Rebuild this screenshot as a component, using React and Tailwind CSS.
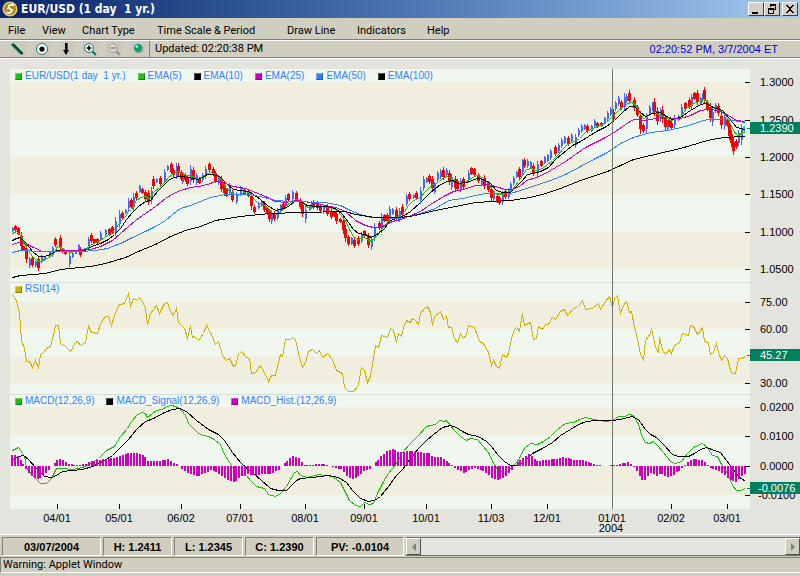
import React from 'react';

const GREEN = '#20c010';
const MAGENTA = '#cc00bb';
const BLUE = '#3080ff';
const GOLD = '#ccb400';
const SANS = '"Liberation Sans", Arial, sans-serif';

const menus = ['File', 'View', 'Chart Type', 'Time Scale & Period', 'Draw Line', 'Indicators', 'Help'];

const priceLegend = [
  { label: 'EUR/USD(1 day  1 yr.)', chip: 'bg-[#20c010]' },
  { label: 'EMA(5)', chip: 'bg-[#20c010]' },
  { label: 'EMA(10)', chip: 'bg-black' },
  { label: 'EMA(25)', chip: 'bg-[#cc00bb]' },
  { label: 'EMA(50)', chip: 'bg-[#3080ff]' },
  { label: 'EMA(100)', chip: 'bg-black' },
];
const rsiLegend = [{ label: 'RSI(14)', chip: 'bg-[#ccb400]' }];
const macdLegend = [
  { label: 'MACD(12,26,9)', chip: 'bg-[#20c010]' },
  { label: 'MACD_Signal(12,26,9)', chip: 'bg-black' },
  { label: 'MACD_Hist.(12,26,9)', chip: 'bg-[#cc00bb]' },
];

// x,high,low
const up = '12,227,231 29,257,267 35,261,266 41,255,262 44,256,260 49,251,257 52,246,256 69,253,266 72,252,257 75,250,253 78,244,250 84,248,250 88,237,248 100,231,240 105,229,235 115,217,235 119,210,227 125,209,213 128,198,210 133,193,210 139,185,192 151,187,203 156,178,182 164,169,182 167,165,170 176,163,178 182,172,183 190,165,184 196,173,184 202,173,181 205,166,178 218,175,184 229,183,194 236,192,203 240,186,195 258,202,208 261,200,206 271,210,223 277,208,219 280,204,211 285,195,208 292,190,200 305,206,222 309,205,210 311,201,208 323,205,213 351,237,244 361,232,242 371,236,249 374,223,240 381,213,232 389,206,221 392,208,214 399,208,221 406,194,205 413,194,198 420,187,203 423,176,190 426,177,182 434,182,193 437,171,181 440,169,178 446,168,176 451,174,189 460,178,191 468,170,182 481,178,184 493,192,200 502,191,204 508,188,198 510,182,192 513,176,184 516,171,177 522,159,175 527,159,167 530,161,168 537,161,175 544,156,163 547,154,161 550,149,159 558,143,152 561,138,147 564,136,143 571,133,142 575,134,147 578,128,136 581,124,132 584,124,129 591,125,131 594,119,127 604,117,123 607,111,120 610,107,115 615,101,110 618,96,105 624,93,110 626,94,102 646,113,132 649,105,115 652,102,110 660,108,121 667,120,130 674,115,127 678,115,120 681,104,116 691,94,108 700,97,104 702,93,101 712,108,125 715,103,112 724,113,129 738,130,145 741,124,144';
const down = '15,225,230 18,227,234 21,232,249 23,246,249 26,244,262 32,256,266 38,256,270 55,237,246 60,235,250 62,248,252 65,250,254 80,247,256 91,233,242 94,239,242 97,238,243 109,228,235 112,226,233 122,211,219 131,198,208 136,191,199 142,188,193 145,190,200 148,190,204 153,176,188 160,176,185 171,162,173 173,168,176 178,163,175 181,170,180 185,173,181 187,176,185 193,167,182 199,177,183 209,162,171 213,167,175 215,171,182 221,176,191 224,182,195 226,189,196 232,190,201 244,189,194 248,190,196 251,192,209 254,205,213 264,201,211 267,207,214 269,209,221 274,211,220 283,203,209 288,193,200 296,191,201 300,198,208 302,202,216 313,200,208 317,201,209 320,204,212 327,204,215 331,209,218 334,211,216 336,211,223 340,218,222 343,217,233 345,225,241 348,235,245 354,238,247 358,236,245 364,230,236 368,233,247 379,221,229 384,214,221 387,213,222 396,207,220 402,204,216 409,192,200 416,191,199 429,174,183 432,176,190 443,167,179 449,170,184 455,176,190 457,179,190 463,177,188 471,167,174 474,168,175 478,173,182 484,175,188 488,181,191 491,185,201 497,194,202 499,196,204 505,189,198 519,167,178 524,158,167 533,163,175 541,160,166 555,145,155 568,136,145 587,124,132 597,122,127 601,122,126 613,109,121 621,100,109 629,90,103 634,97,110 637,105,116 640,111,133 643,123,132 654,98,115 657,107,124 662,106,122 665,115,129 669,119,126 671,121,129 685,102,109 689,98,108 694,92,99 697,90,104 704,87,102 707,100,110 710,103,121 718,103,115 721,112,128 727,118,126 729,121,139 731,130,146 733,138,154 736,139,148';

const ema5 = '12,233 16,231 20,235 24,243 28,250 32,256 36,260 40,261 44,259 49,257 54,252 57,246 61,247 65,250 70,252 78,250 85,249 90,245 95,242 100,240 104,237 110,233 116,227 120,221 125,216 128,211 131,209 136,200 140,197 145,196 149,198 153,192 159,187 164,182 168,177 172,174 177,171 182,173 187,175 192,176 198,178 205,175 209,172 214,173 220,178 225,187 230,191 236,195 240,194 245,191 250,193 254,199 258,203 263,204 268,208 272,213 277,214 281,211 285,206 290,202 295,199 301,200 306,206 310,208 316,206 320,206 328,207 333,208 338,211 342,217 346,222 349,229 353,236 358,239 364,237 367,239 371,241 376,236 381,229 386,223 390,218 394,217 402,214 408,205 413,200 420,197 425,191 432,184 438,182 443,177 447,176 452,179 459,184 465,182 472,177 477,175 482,177 487,182 491,188 496,194 502,194 508,192 512,189 518,181 522,175 526,169 531,168 535,170 540,169 546,165 552,160 558,154 562,149 567,144 574,141 579,138 585,132 592,128 600,125 606,122 611,117 618,110 623,106 627,103 631,102 635,104 639,112 643,118 648,116 652,112 658,114 664,117 671,120 676,118 681,115 686,108 693,103 699,101 703,99 707,101 711,107 716,108 720,110 725,115 729,121 733,130 737,135 741,133 745,131';
const ema10 = '12,240 16,238 20,237 26,243 32,251 38,256 44,256 50,254 57,250 66,251 76,251 85,250 91,246 100,243 108,239 114,234 120,228 126,219 132,212 138,206 145,201 150,200 157,191 164,184 169,179 174,177 180,176 188,177 198,179 207,174 213,174 219,176 226,183 233,189 240,190 248,191 253,194 260,199 267,205 275,210 280,209 288,206 295,200 300,201 307,205 315,206 325,206 335,208 342,214 348,222 353,229 358,233 365,234 371,237 378,233 384,228 390,220 396,218 402,216 410,211 420,202 430,192 440,184 447,181 452,180 458,183 466,182 477,178 483,179 490,183 496,190 502,192 510,192 516,186 522,180 527,174 533,173 540,171 548,167 556,158 566,150 572,145 580,141 588,136 598,130 606,126 614,120 622,112 629,106 634,106 640,112 645,116 652,113 660,112 671,119 680,117 690,110 700,104 706,103 713,107 722,110 729,118 736,127 745,129';
const ema25 = '12,244 18,242 25,243 33,247 42,251 55,251 65,250 78,250 90,249 100,246 112,240 120,233 128,226 135,220 145,213 155,206 165,198 173,193 180,190 190,187 198,186 207,184 215,181 222,182 233,186 245,188 255,192 265,196 275,201 285,202 297,200 310,202 325,205 335,207 345,211 355,220 365,225 373,227 382,226 392,221 400,219 408,216 420,211 430,204 443,196 453,191 463,189 475,185 488,184 495,186 505,189 512,189 519,186 526,180 536,177 545,173 555,167 565,161 575,154 585,147 595,142 605,137 615,131 625,124 633,119 645,120 660,117 680,118 690,115 700,110 708,109 718,110 728,115 736,120 745,121';
const ema50 = '12,252 20,250 40,251 60,251 80,251 95,250 107,248 120,243 130,238 145,231 155,226 165,220 172,214 180,208 190,205 205,199 210,197 225,194 247,194 260,196 275,200 290,201 325,202 340,205 350,210 360,214 370,217 382,217 395,218 405,217 420,213 435,208 448,200 462,198 475,195 485,193 510,193 520,190 535,185 550,180 565,174 580,166 595,158 607,152 620,143 633,137 650,132 667,130 685,126 700,121 707,119 725,119 745,122';
const ema100 = '12,277 20,275 45,273 60,269 90,266 105,263 125,257 140,250 155,244 170,236 185,230 200,226 215,220 240,216 270,213 300,212 345,211 355,214 375,217 390,217 400,217 415,215 430,211 450,207 460,205 475,202 492,201 510,200 530,197 545,193 560,188 580,180 607,171 633,159 650,155 667,151 680,148 707,140 723,137 745,136';

const rsi = '12,294 16,300 19,313 21,340 24,348 26,361 29,361 32,367 35,360 38,368 40,354 43,352 46,348 50,346 53,335 55,325 58,325 60,343 65,346 70,351 75,342 77,341 80,345 85,342 88,326 91,332 97,333 100,323 105,316 108,316 111,325 114,315 118,305 120,304 124,303 128,293 130,306 133,298 136,300 139,297 143,303 145,308 147,324 150,313 156,305 159,313 164,303 167,302 170,311 173,315 176,308 178,322 184,328 187,338 190,325 192,337 194,336 198,340 203,333 206,325 211,334 215,344 218,341 222,355 226,360 229,358 233,366 235,365 238,354 241,351 246,357 249,358 251,373 255,372 260,365 264,372 268,381 271,375 275,375 280,354 282,356 285,339 290,339 292,337 295,339 299,357 302,367 305,362 308,351 312,349 316,353 319,350 322,357 327,353 332,359 336,370 342,373 344,387 348,391 353,391 358,385 361,367 364,370 367,382 370,376 373,358 375,345 378,347 381,335 387,337 390,328 393,330 396,342 398,333 401,336 403,327 406,320 410,322 412,318 415,320 418,324 420,313 424,308 427,306 430,312 432,325 434,316 440,311 443,319 446,316 448,327 451,327 454,338 457,342 460,333 463,338 466,334 468,325 474,327 477,335 479,341 483,343 488,352 491,365 493,360 496,366 499,368 502,354 506,357 508,353 511,338 514,329 516,327 519,331 522,313 524,325 530,322 533,339 536,338 538,326 542,329 545,324 548,324 552,317 555,319 560,311 564,309 567,315 573,308 578,306 582,300 585,309 592,308 598,303 600,309 605,301 609,296 612,307 614,298 617,295 620,313 623,305 626,301 629,312 631,311 634,327 638,342 640,354 643,359 645,340 650,333 651,328 655,347 658,352 659,337 662,350 665,354 669,349 671,353 674,345 679,342 682,333 688,335 690,325 693,326 697,334 702,327 704,341 708,342 710,354 713,352 716,343 718,352 721,360 724,355 727,358 730,370 732,373 735,373 738,358 741,358 745,356';

const macd = '12,450 18,447 24,456 26,467 29,471 32,475 36,479 40,483 46,483 51,478 56,468 63,468 72,469 82,467 92,462 98,458 106,450 114,446 120,436 127,428 131,421 137,414 142,412 145,413 147,417 152,413 156,410 162,409 166,406 172,405 174,406 178,407 182,411 186,417 188,423 193,428 198,433 203,435 208,436 214,439 220,444 224,454 229,462 232,467 236,473 246,475 250,480 256,486 264,488 268,494 275,496 280,493 286,486 290,479 294,472 297,471 300,475 307,477 318,474 332,476 340,482 344,490 349,500 355,505 360,506 364,502 369,504 373,503 377,493 382,483 388,473 395,464 402,452 410,443 418,435 426,426 430,425 435,424 439,420 444,421 446,420 450,425 454,430 460,436 466,440 470,438 477,439 482,445 488,452 493,463 498,470 505,473 510,468 517,461 524,448 530,443 537,444 543,441 550,436 557,429 565,423 573,422 579,419 585,417 594,419 605,421 612,420 618,416 624,416 629,414 633,415 638,424 642,437 645,442 649,443 653,441 657,445 663,452 670,461 675,463 681,461 687,453 693,447 702,443 706,446 712,455 717,456 721,464 728,475 732,485 736,490 740,490 745,488';
const signal = '12,460 18,456 23,455 28,459 36,468 44,476 51,477 56,475 62,471 72,470 82,469 92,466 104,460 112,455 120,447 128,439 136,429 145,421 153,418 164,412 172,409 179,408 186,411 196,420 208,429 218,434 224,440 232,452 240,462 250,471 260,479 270,488 278,490 286,490 296,480 300,478 312,477 328,475 338,477 346,482 352,490 360,498 368,501 374,500 380,496 388,486 396,475 402,469 410,458 418,448 426,440 433,434 442,427 450,425 456,427 462,431 468,434 478,436 486,441 491,446 497,454 504,461 510,465 517,465 524,461 532,453 542,448 552,442 560,435 570,429 578,424 586,421 596,420 606,420 613,420 624,418 631,416 638,419 645,429 650,434 656,437 664,445 672,454 678,456 688,456 694,453 700,449 706,447 714,450 720,452 726,460 732,468 738,476 745,481';
const hist = '11,11 16,11 19,9 21,3 23,0 26,-5 30,-9 34,-12 38,-13 41,-10 45,-7 49,-3 51,0 55,4 57,7 62,6 68,2 75,1 85,2 90,5 105,7 112,8 122,11 128,13 136,13 142,11 147,5 155,5 160,5 167,7 173,3 178,2 181,-3 187,-7 197,-10 205,-7 210,-4 216,-7 225,-13 234,-16 238,-12 245,-8 255,-10 262,-8 270,-8 278,-4 281,0 285,4 291,10 297,9 303,1 323,2 328,0 334,-2 340,-3 348,-12 353,-13 360,-8 364,-4 370,-3 375,4 381,11 388,16 392,17 398,13 402,14 408,15 415,14 428,13 432,9 440,9 447,4 452,0 456,-4 464,-7 470,-3 475,-2 483,-5 491,-12 498,-14 505,-10 512,-3 516,3 522,8 528,12 533,8 536,5 545,6 555,7 563,9 573,6 583,6 592,2 605,0 613,1 620,2 627,4 633,-1 638,-8 642,-16 650,-7 656,-10 660,-8 667,-11 673,-9 680,-3 684,1 688,5 693,7 702,6 706,2 711,-3 717,-4 722,-8 730,-14 734,-17 739,-12 745,-7';

const months = [
  [57, '04/01'], [119, '05/01'], [181, '06/02'], [240, '07/01'], [305, '08/01'], [364, '09/01'],
  [426, '10/01'], [491, '11/03'], [547, '12/01'], [612, '01/01'], [671, '02/02'], [727, '03/01'],
];

const parse = (s) => s.split(' ').map((p) => p.split(',').map(Number));

const bars = () => {
  const pts = parse(hist);
  const out = [];
  for (let i = 0; i < 259; i++) {
    const x = Math.round(11 + i * 2.84);
    const k = pts.findIndex((p) => p[0] >= x);
    if (k < 0) break;
    const [x1, h1] = pts[k];
    const [x0, h0] = pts[Math.max(0, k - 1)];
    const h = x1 === x0 ? h1 : Math.round(h0 + ((h1 - h0) * (x - x0)) / (x1 - x0));
    if (h !== 0) out.push({ x, h });
  }
  return out;
};

const Line = ({ points, color }) => (
  <polyline points={points} fill="none" stroke={color} strokeWidth="1" shapeRendering="crispEdges" transform="translate(0.5 0.5)" />
);

const Candles = ({ data, color, width }) => (
  <g fill={color} shapeRendering="crispEdges">
    {parse(data).map(([x, hi, lo]) => {
      const inset = Math.floor((lo - hi) * 0.25);
      return (
        <g key={x}>
          <rect x={x} y={hi} width="1" height={lo - hi + 1} />
          <rect x={x - (width > 2 ? 1 : 0)} y={hi + inset} width={width} height={Math.max(2, lo - hi - inset * 2 + 1)} />
        </g>
      );
    })}
  </g>
);

const Legend = ({ items }) => (
  <ul className="absolute left-[15px] top-0 flex gap-3 text-[10px] leading-[14px] text-[#3080ff]">
    {items.map((item) => (
      <li key={item.label} className="flex items-center gap-[3px] whitespace-pre">
        <span className={`w-[7px] h-[7px] border border-t-white/30 border-l-white/30 border-b-black/30 border-r-black/30 ${item.chip}`}></span>
        {item.label}
      </li>
    ))}
  </ul>
);

// top/bottom are shared chart coordinates, so every panel keeps the same x scale
const Panel = ({ label, top, bottom, plotBottom, bands, ticks, badge, legend, children }) => (
  <section className="relative" aria-label={label}>
    <svg viewBox={`0 ${top} 800 ${bottom - top}`} className="block w-full h-auto" fontFamily={SANS} fontSize="11">
      <rect x="10" y={top} width="740" height={plotBottom - top} fill="#f0f7ef" />
      {bands.map(([y, h]) => (
        <rect key={y} x="10" y={y} width="740" height={h} fill="#efeedf" />
      ))}
      {top > 69 && <rect x="10" y={top} width="740" height="1" fill="#d8dcd6" />}
      {children}
      <rect x="612" y={top} width="1" height={plotBottom - top} fill="#6e7870" />
      {ticks.map(([y, text]) => (
        <g key={text}>
          <rect x="745" y={y} width="5" height="1" />
          <text x={text.startsWith('-') ? 758 : 760} y={y + 4}>{text}</text>
        </g>
      ))}
      <rect x="747" y={badge[0] + 6} width="3" height="1" fill="#008060" />
      <rect x="750" y={badge[0]} width="50" height="12" fill="#008060" />
      <text x={badge[1].startsWith('-') ? 758 : 760} y={badge[0] + 10} fill="#fff">{badge[1]}</text>
    </svg>
    <Legend items={legend} />
  </section>
);

const ToolButton = ({ label, children }) => (
  <button type="button" aria-label={label} className="w-4 h-4 flex items-center justify-center bg-[#cccabe]">
    <svg viewBox="0 0 14 14" className="w-[14px] h-[14px]">{children}</svg>
  </button>
);

const WindowButton = ({ label, children }) => (
  <button type="button" aria-label={label} className="w-4 h-[14px] bg-[#d4d0c8] border border-t-white border-l-white border-b-[#404040] border-r-[#404040] flex items-center justify-center">
    <svg viewBox="0 0 12 10" className="w-3 h-[10px]" shapeRendering="crispEdges">{children}</svg>
  </button>
);

const ScrollButton = ({ label, d }) => (
  <button type="button" aria-label={label} className="w-[15px] bg-[#d0cebf] border border-t-white border-l-white border-b-[#505050] border-r-[#505050] flex items-center justify-center">
    <svg viewBox="0 0 6 10" className="w-[6px] h-[10px]"><path d={d} fill="#808080" /></svg>
  </button>
);

const StatusCell = ({ className, children }) => (
  <div className={`h-[19px] border border-t-[#808080] border-l-[#808080] border-b-white border-r-white text-center text-[11px] leading-[18px] font-bold ${className}`}>
    {children}
  </div>
);

const App = () => (
  <div className="w-full bg-[#d0cebf] text-black select-none font-['Liberation_Sans',Arial,sans-serif]">
    <header className="h-[18px] flex items-center pl-[2px] pr-[2px] bg-linear-to-r from-[#0a246a] via-[#4a74b0] to-[#a6caf0]">
      <svg viewBox="0 0 16 16" className="w-4 h-4 mr-[3px]">
        <circle cx="8" cy="8" r="7.5" fill="#e8d070" />
        <circle cx="8" cy="8" r="6" fill="#b08a18" />
        <path d="M12 4.2C9.5 3.2 6.6 4 6.6 6c0 2.2 3.4 2 3.2 4-.2 1.700-3 2.300-5.600 1.400" fill="none" stroke="#fff" strokeWidth="1.800" />
        <path d="M5 8.500 9 3.500M7.500 12.500l3.500-4.500" stroke="#fff" strokeWidth="1" />
      </svg>
      <h1 className="flex-1 text-white text-[12px] leading-[18px] font-bold whitespace-pre font-['DejaVu_Sans_Condensed','DejaVu_Sans',sans-serif]">EUR/USD (1 day  1 yr.)</h1>
      <div className="flex">
        <WindowButton label="Minimize"><path d="M2 8h6v2H2z" /></WindowButton>
        <WindowButton label="Restore">
          <path d="M4 0h6v6H8V5h1V2H5v1H4zM2 4h6v6H2zM3 6v3h4V6z" fillRule="evenodd" />
        </WindowButton>
        <span className="w-[2px]"></span>
        <WindowButton label="Close">
          <path d="M2 1h2v1h1v1h2V2h1V1h2v1H9v1H8v1H7v2h1v1h1v1h1v1H8V8H7V7H5v1H4v1H2V8h1V7h1V6h1V4H4V3H3V2H2z" />
        </WindowButton>
      </div>
    </header>

    <nav className="h-[22px] pl-2 pt-1 grid grid-cols-[34px_40px_75px_130px_70px_70px_auto] justify-start items-center border-b border-[#808080] text-[11px] leading-4 font-[Roboto,Arial,sans-serif]">
      {menus.map((m) => (
        <button key={m} type="button" className="text-left whitespace-nowrap">{m}</button>
      ))}
    </nav>

    <div className="h-[18px] flex items-center pl-[10px] pr-[22px] border-t border-t-white border-b border-b-[#808080]">
      <div className="flex gap-2">
        <ToolButton label="Draw line">
          <path d="M1 2l10 10" stroke="#008060" strokeWidth="3" />
          <path d="M2 2l10 10" stroke="#102020" strokeWidth="1.200" />
        </ToolButton>
        <ToolButton label="Crosshair">
          <circle cx="7" cy="7" r="5.500" fill="#fff" stroke="#108060" />
          <circle cx="7" cy="7" r="2.600" />
        </ToolButton>
        <ToolButton label="Arrow">
          <path d="M6 1h2v8H6z" />
          <path d="M8 1h1v8H8z" fill="#008060" />
          <path d="M4 8h6l-3 5z" />
        </ToolButton>
        <ToolButton label="Zoom in">
          <circle cx="6" cy="6" r="4.500" fill="#fff" stroke="#108060" />
          <path d="M3.500 6h5M6 3.500v5" stroke="#000" strokeWidth="1.600" />
          <path d="M9.500 9.500l3.500 3.500" stroke="#008060" strokeWidth="2" />
        </ToolButton>
        <ToolButton label="Zoom out">
          <circle cx="6" cy="6" r="4.500" fill="#d8d8d0" stroke="#a0a098" />
          <path d="M3.500 6h5" stroke="#808080" strokeWidth="1.400" />
          <path d="M9.500 9.500l3.500 3.500" stroke="#909088" strokeWidth="2" />
        </ToolButton>
        <ToolButton label="Refresh">
          <circle cx="8" cy="7" r="4.500" fill="#a8a8a0" />
          <circle cx="7" cy="6" r="4.200" fill="#10a070" />
          <circle cx="5.800" cy="4.600" r="1.400" fill="#a0f0d0" />
        </ToolButton>
      </div>
      <p className="flex-1 ml-[3px] pl-[5px] border-l border-[#808080] text-[11px] leading-4 font-[Roboto,Arial,sans-serif]">Updated: 02:20:38 PM</p>
      <p className="text-[11px] leading-4 text-[#0000e0]">02:20:52 PM, 3/7/2004 ET</p>
    </div>

    <main className="pt-[10px] bg-[#e4e4de] border-t border-white">
      <Panel label="Price" top={69} bottom={282} plotBottom={282} bands={[[82, 38], [157, 37], [232, 37]]}
        ticks={[[82, '1.3000'], [120, '1.2500'], [157, '1.2000'], [194, '1.1500'], [232, '1.1000'], [269, '1.0500']]}
        badge={[122, '1.2390']} legend={priceLegend}>
        <Candles data={up} color="#4468ff" width={2} />
        <Candles data={down} color="#f80000" width={3} />
        <rect x="743" y="126" width="2" height="5" fill="#20c8d8" />
        <Line points={ema5} color={GREEN} />
        <Line points={ema10} color="#000" />
        <Line points={ema25} color={MAGENTA} />
        <Line points={ema50} color={BLUE} />
        <Line points={ema100} color="#000" />
      </Panel>
      <Panel label="RSI" top={282} bottom={394} plotBottom={394} bands={[[302, 27], [356, 27]]}
        ticks={[[302, '75.00'], [329, '60.00'], [383, '30.00']]} badge={[349, '45.27']} legend={rsiLegend}>
        <Line points={rsi} color={GOLD} />
      </Panel>
      <Panel label="MACD" top={394} bottom={534} plotBottom={509} bands={[[407, 29], [466, 29]]}
        ticks={[[407, '0.0200'], [436, '0.0100'], [466, '0.0000'], [495, '-0.0100']]} badge={[482, '-0.0076']} legend={macdLegend}>
        <Line points={macd} color={GREEN} />
        <Line points={signal} color="#000" />
        <g fill={MAGENTA} shapeRendering="crispEdges">
          {bars().map(({ x, h }) => (
            <rect key={x} x={x} y={h > 0 ? 466 - h : 466} width="2" height={Math.abs(h)} />
          ))}
        </g>
        <g textAnchor="middle">
          {months.map(([x, text]) => (
            <g key={text}>
              <rect x={x} y="504" width="1" height="5" />
              <text x={x} y="522">{text}</text>
            </g>
          ))}
          <text x="611" y="532">2004</text>
        </g>
      </Panel>
    </main>

    <div className="flex gap-[2px] pl-[2px] pt-[2px] pb-px border-t border-white">
      <StatusCell className="w-[99px]">03/07/2004</StatusCell>
      <StatusCell className="w-[69px]">H: 1.2411</StatusCell>
      <StatusCell className="w-[69px]">L: 1.2345</StatusCell>
      <StatusCell className="w-[69px]">C: 1.2390</StatusCell>
      <StatusCell className="w-[88px]">PV: -0.0104</StatusCell>
      <div className="flex-1 flex h-[19px] border-t border-b border-[#707070] bg-[#e4e4de]">
        <ScrollButton label="Scroll left" d="M5 1v8L1 5z" />
        <div className="flex-1"></div>
        <ScrollButton label="Scroll right" d="M1 1v8l4-4z" />
      </div>
    </div>
    <footer className="h-[16px] pl-[2px] border-t border-l border-[#808080] border-b border-b-white text-[11px] leading-[14px] font-[Roboto,Arial,sans-serif]">
      Warning: Applet Window
    </footer>
    <div className="h-1 border-b border-white"></div>
  </div>
);

export default App;
